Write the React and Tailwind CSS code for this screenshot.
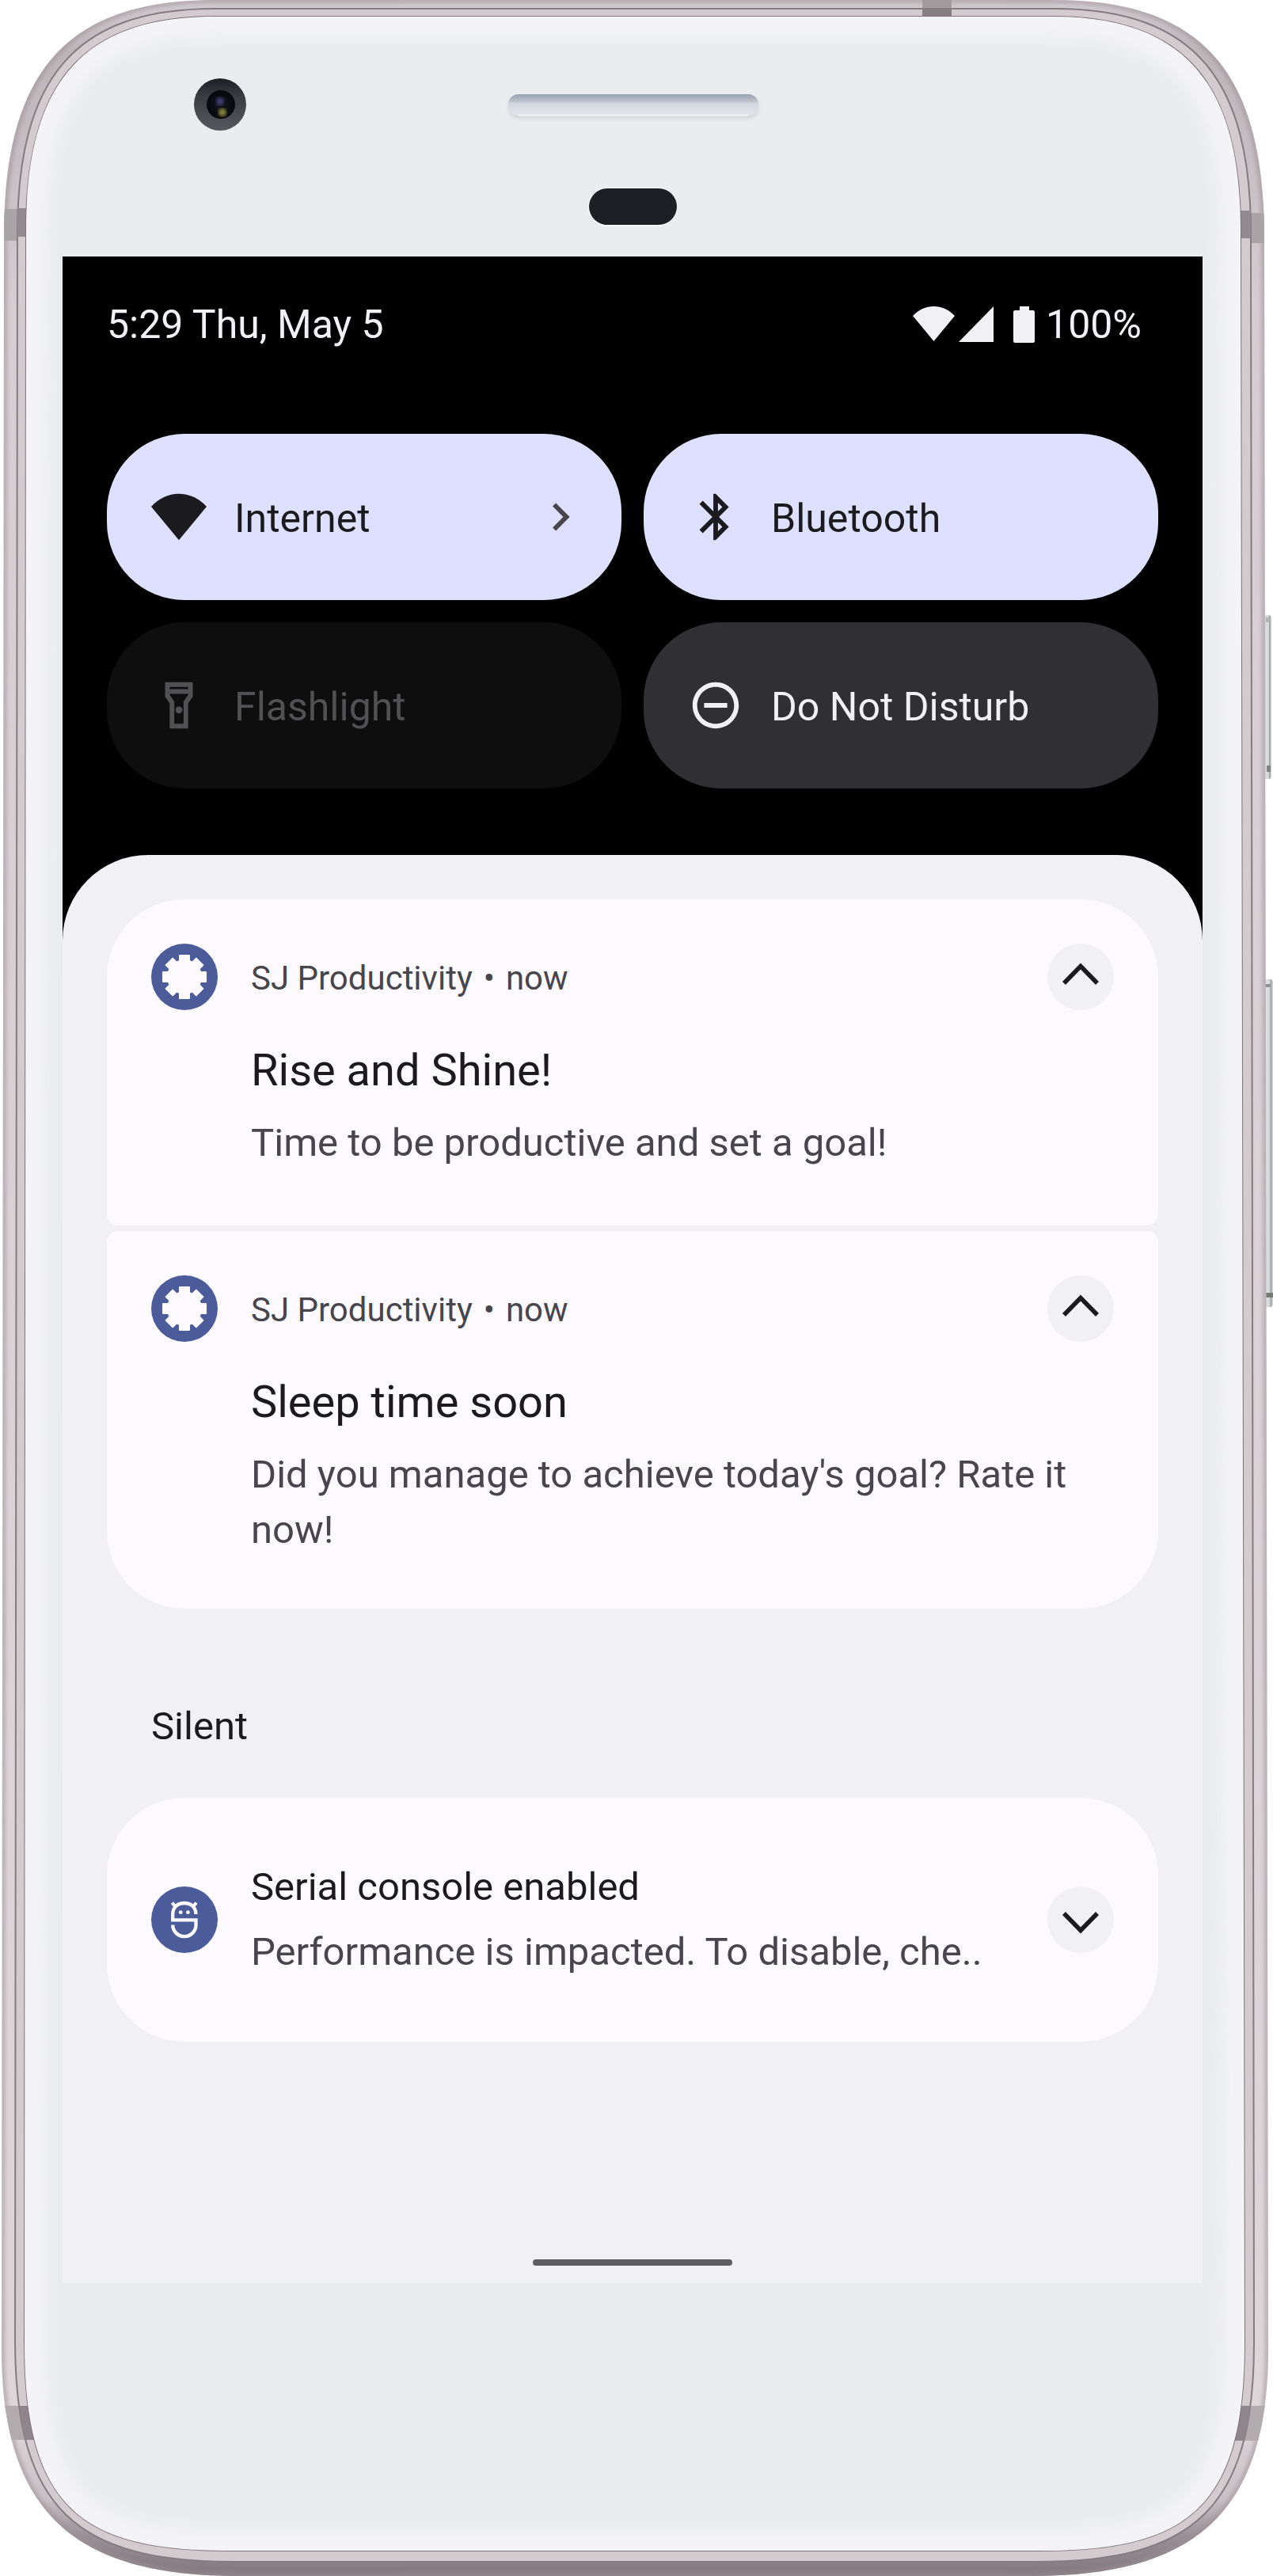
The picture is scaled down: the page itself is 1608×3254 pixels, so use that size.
import React from "react";

const OUTER =
  "M270 0H1332C1522 0 1597 95 1597 300L1602 2960C1604 3170 1514 3254 1304 3254H300C90 3254 0 3170 2 2960L5 300C5 95 80 0 270 0Z";
const MIDDLE =
  "M270 11H1332C1510 11 1580 102 1580 295L1584 2960C1584 3170 1506 3236 1309 3236H295C98 3236 20 3170 19 2960L22 295C22 102 92 11 270 11Z";
const GLASS =
  "M270 21H1330C1500 21 1567 110 1567 290L1572 2960C1572 3170 1498 3222 1314 3222H290C105 3222 31 3170 31 2960L33 290C33 110 100 21 270 21Z";

function PhoneBody() {
  return (
    <svg
      aria-hidden="true"
      className="absolute inset-0 h-full w-full"
      viewBox="0 0 1608 3254"
      preserveAspectRatio="none"
    >
      <defs>
        <linearGradient id="metal" x1="0" y1="0" x2="0" y2="1">
          <stop offset="0" stopColor="#d2cdd0" />
          <stop offset="0.02" stopColor="#bdb4b8" />
          <stop offset="0.06" stopColor="#c6bec2" />
          <stop offset="0.12" stopColor="#d6ced2" />
          <stop offset="0.94" stopColor="#ded7da" />
          <stop offset="0.97" stopColor="#c8c0c4" />
          <stop offset="0.985" stopColor="#988e93" />
          <stop offset="1" stopColor="#81777c" />
        </linearGradient>
        <linearGradient id="speaker" x1="0" y1="0" x2="0" y2="1">
          <stop offset="0" stopColor="#98a1b0" />
          <stop offset="0.3" stopColor="#b9c0cb" />
          <stop offset="0.45" stopColor="#d3d8df" />
          <stop offset="1" stopColor="#e2e5ea" />
        </linearGradient>
        <linearGradient id="key" x1="0" y1="0" x2="1" y2="0">
          <stop offset="0" stopColor="#a9abab" />
          <stop offset="0.3" stopColor="#dfe2e1" />
          <stop offset="0.65" stopColor="#d3d8d8" />
          <stop offset="0.75" stopColor="#9c9f9f" />
          <stop offset="1" stopColor="#dadddd" />
        </linearGradient>
        <radialGradient id="lens">
          <stop offset="0" stopColor="#15161c" />
          <stop offset="1" stopColor="#07080b" />
        </radialGradient>
        <linearGradient id="ring" x1="0" y1="0" x2="0" y2="1">
          <stop offset="0" stopColor="#1d1e22" />
          <stop offset="0.35" stopColor="#3b3d42" />
          <stop offset="1" stopColor="#55585d" />
        </linearGradient>
        <clipPath id="outer"><path d={OUTER} /></clipPath>
        <clipPath id="middle"><path d={MIDDLE} /></clipPath>
        <clipPath id="glass"><path d={GLASS} /></clipPath>
        <filter id="soft2"><feGaussianBlur stdDeviation="2" /></filter>
        <filter id="soft9" x="-5%" y="-5%" width="110%" height="110%"><feGaussianBlur stdDeviation="9" /></filter>
      </defs>

      <rect x="1596" y="777" width="10" height="207" rx="4" fill="url(#key)" />
      <rect x="1599" y="780" width="5" height="6" fill="#b0b4b4" />
      <rect x="1600" y="967" width="5" height="8" fill="#7f8585" />
      <rect x="1596" y="1237" width="12" height="414" rx="4" fill="url(#key)" />
      <rect x="1597" y="1243" width="8" height="4" fill="#8f9393" />
      <rect x="1597" y="1633" width="11" height="6" fill="#747a76" />

      <path d={OUTER} fill="url(#metal)" />
      <g clipPath="url(#outer)">
        <path d={OUTER} fill="none" stroke="#9d9196" strokeWidth="9" opacity="0.5" filter="url(#soft2)" />
        <rect x="0" y="264" width="60" height="40" fill="#aaa4a7" />
        <rect x="1540" y="269" width="60" height="38" fill="#aaa4a7" />
        <rect x="0" y="3039" width="60" height="43" fill="#b2abae" />
        <rect x="1540" y="3039" width="64" height="44" fill="#b2abae" />
        <rect x="1165" y="0" width="37" height="24" fill="#a39a9e" />
      </g>
      <path d={MIDDLE} fill="#d3cbce" stroke="#857b80" strokeWidth="2" />
      <g clipPath="url(#middle)">
        <rect x="0" y="263" width="60" height="36" fill="#918a8e" />
        <rect x="1540" y="266" width="60" height="35" fill="#918a8e" />
        <rect x="0" y="3039" width="60" height="43" fill="#8f868b" />
        <rect x="1540" y="3039" width="60" height="44" fill="#8f868b" />
        <rect x="1165" y="0" width="37" height="24" fill="#877e82" />
      </g>
      <path d={GLASS} fill="#ebecee" stroke="#7c7378" strokeWidth="2" />
      <g clipPath="url(#glass)">
        <path d={GLASS} fill="none" stroke="#f4f4f6" strokeWidth="50" filter="url(#soft9)" />
      </g>

      <circle cx="278" cy="132" r="33" fill="url(#ring)" />
      <circle cx="279" cy="132" r="18" fill="url(#lens)" />
      <circle cx="278" cy="128" r="5" fill="#3f3f78" filter="url(#soft2)" />
      <circle cx="281" cy="142" r="5" fill="#8b8a3c" filter="url(#soft2)" />

      <rect x="642" y="122" width="317" height="28" rx="14" fill="#d3d6da" filter="url(#soft2)" />
      <rect x="642" y="119" width="316" height="27" rx="13" fill="url(#speaker)" />
      <path d="M655 145.500H945" stroke="#f4f5f7" strokeWidth="2" />
      <rect x="743" y="237" width="112" height="49" rx="24" fill="#fafafb" />
      <rect x="744" y="238" width="111" height="46" rx="23" fill="#1d1f25" />
    </svg>
  );
}

const WIFI = "M12 20L0 5.5C3.3 2 7.5 0 12 0S20.7 2 24 5.5Z";

function StatusIcons() {
  return (
    <svg aria-hidden="true" className="h-[46px] w-[154px]" viewBox="0 0 154 46" fill="currentColor">
      <path d="M26.500 44L0 12C7.500 4 16.500 0 26.500 0S45.500 4 53 12Z" />
      <path d="M102 0V45H58Z" />
      <path d="M135 0H147V5H152Q154 5 154 7V44Q154 46 152 46H129Q127 46 127 44V7Q127 5 129 5H135Z" />
    </svg>
  );
}

function Icon({ children, className = "" }) {
  return (
    <svg aria-hidden="true" className={`size-[70px] shrink-0 ${className}`} viewBox="0 0 24 24" fill="currentColor">
      {children}
    </svg>
  );
}

const icons = {
  internet: <g transform="translate(0 2)"><path d={WIFI} /></g>,
  bluetooth: (
    <path d="M17.710 7.710 12 2h-1v7.590L6.410 5 5 6.410 10.590 12 5 17.590 6.410 19 11 14.410V22h1l5.710-5.710-4.300-4.290 4.300-4.290zM13 5.830l1.880 1.880L13 9.590V5.830zm1.880 10.460L13 18.170v-3.760l1.880 1.880z" />
  ),
  flashlight: (
    <>
      <path fillRule="evenodd" d="M6 2h12v6.200l-2 2.900V22H8V11.100L6 8.200ZM8 4v1h8V4ZM8 7v.400l2 3V20h4v-9.600l2-3V7Z" />
      <circle cx="12" cy="14" r="1.500" />
    </>
  ),
  dnd: (
    <path d="M7 11v2h10v-2H7zm5-9C6.480 2 2 6.480 2 12s4.480 10 10 10 10-4.480 10-10S17.520 2 12 2zm0 18c-4.410 0-8-3.590-8-8s3.590-8 8-8 8 3.590 8 8-3.590 8-8 8z" />
  ),
};

function Tile({ icon, label, tone, disabled, more }) {
  return (
    <button
      type="button"
      disabled={disabled}
      className={`flex h-[210px] items-center rounded-[98px] pl-14 pr-[42px] text-left ${tone}`}
    >
      <Icon>{icons[icon]}</Icon>
      <span className="ml-[35px] flex-1 pt-1 text-[50px] leading-[70px]">{label}</span>
      {more && (
        <Icon className="text-[#47464c]">
          <path d="M10 6 8.590 7.410 13.170 12l-4.580 4.590L10 18l6-6z" />
        </Icon>
      )}
    </button>
  );
}

function GearBadge() {
  return (
    <svg aria-hidden="true" className="size-[84px] shrink-0" viewBox="0 0 84 84">
      <circle cx="42" cy="42" r="42" fill="#4c5b99" />
      <g fill="#fcfaff">
        <circle cx="42" cy="42" r="22" />
        <rect x="35" y="14" width="14" height="56" rx="1" />
        <rect x="35" y="14" width="14" height="56" rx="1" transform="rotate(45 42 42)" />
        <rect x="35" y="14" width="14" height="56" rx="1" transform="rotate(90 42 42)" />
        <rect x="35" y="14" width="14" height="56" rx="1" transform="rotate(135 42 42)" />
      </g>
    </svg>
  );
}

function SerialBadge() {
  return (
    <svg aria-hidden="true" className="size-[84px] shrink-0" viewBox="0 0 84 84">
      <circle cx="42" cy="42" r="42" fill="#4c5b99" />
      <g fill="none" stroke="#fcfaff" strokeWidth="4.300">
        <path d="M56.500 35C56.500 26 50 21 41.800 21S27.200 26 27.200 35V42.300H56.500V48.500A14.650 14.650 0 0 1 27.200 48.500" />
        <path d="M26.500 20.500 31 26M57 20.500 52.500 26" />
      </g>
      <circle cx="37.200" cy="32.700" r="2.400" fill="#fcfaff" />
      <circle cx="46.400" cy="32.700" r="2.400" fill="#fcfaff" />
    </svg>
  );
}

function ExpandButton({ label, expanded }) {
  return (
    <button
      type="button"
      aria-label={label}
      aria-expanded={expanded}
      className="size-[84px] shrink-0 rounded-full bg-[#f1f0f4] text-[#1b1b1f]"
    >
      <svg
        aria-hidden="true"
        className={`size-full ${expanded ? "rotate-180" : ""}`}
        viewBox="0 0 84 84"
        fill="none"
        stroke="currentColor"
        strokeWidth="5.600"
      >
        <path d="M21 34 42 55.500 63 34" />
      </svg>
    </button>
  );
}

function Notification({ title, text, shape }) {
  return (
    <article className={`flex items-start gap-[42px] bg-[#fcfaff] px-14 pt-14 ${shape}`}>
      <GearBadge />
      <div className="min-w-0 flex-1">
        <header className="flex h-[84px] items-center justify-between">
          <p className="flex gap-3.5 pt-1 text-[42px] leading-[56px] text-[#47464c]">
            <span>SJ Productivity</span>
            <span>•</span>
            <time>now</time>
          </p>
          <ExpandButton label={`Collapse ${title}`} expanded />
        </header>
        <h2 className="mt-[34px] text-[56px] leading-[84px] text-[#1b1b1f]">{title}</h2>
        <p className="mt-[15px] text-[49px] leading-[70px] text-[#47464c]">{text}</p>
      </div>
    </article>
  );
}

export default function App() {
  return (
    <div className="relative w-full bg-white pt-[324px] pr-[89px] pb-[370px] pl-[79px] font-[Roboto,sans-serif]">
      <PhoneBody />
      <main className="relative bg-black">
        <div className="flex items-center justify-between px-14 pt-12 text-[50px] leading-[76px] text-[#f1f0f4]">
          <time>5:29 Thu, May 5</time>
          <div className="flex items-center gap-3.5 pr-[21px]">
            <StatusIcons />
            <span>100%</span>
          </div>
        </div>

        <section aria-label="Quick settings" className="mt-[100px] grid grid-cols-2 gap-7 px-14 pb-[84px]">
          <Tile icon="internet" label="Internet" tone="bg-[#dde0ff] text-[#1b1b1f]" more />
          <Tile icon="bluetooth" label="Bluetooth" tone="bg-[#dde0ff] text-[#1b1b1f]" />
          <Tile icon="flashlight" label="Flashlight" tone="bg-[#0e0e0e] text-[#515153]" disabled />
          <Tile icon="dnd" label="Do Not Disturb" tone="bg-[#303034] text-[#f1f0f4]" />
        </section>

        <section aria-label="Notifications" className="rounded-t-[108px] bg-[#f1f0f4] px-14 pt-14 pb-[22px]">
          <div className="flex flex-col gap-[7px]">
            <Notification
              title="Rise and Shine!"
              text="Time to be productive and set a goal!"
              shape="rounded-t-[98px] rounded-b-[14px] pb-[69px]"
            />
            <Notification
              title="Sleep time soon"
              text="Did you manage to achieve today's goal? Rate it now!"
              shape="rounded-t-[14px] rounded-b-[98px] pb-16"
            />
          </div>

          <h2 className="mt-[114px] pl-14 text-[49px] leading-[70px] text-[#1b1b1f]">Silent</h2>

          <article className="mt-[55px] flex h-[308px] items-center gap-[42px] rounded-[98px] bg-[#fcfaff] px-14">
            <SerialBadge />
            <div className="min-w-0 flex-1">
              <h3 className="text-[49px] leading-[70px] text-[#1b1b1f]">Serial console enabled</h3>
              <p className="mt-3 text-[49px] leading-[70px] text-[#47464c]">Performance is impacted. To disable, che..</p>
            </div>
            <ExpandButton label="Expand Serial console enabled" expanded={false} />
          </article>

          <div className="mx-auto mt-[275px] h-2 w-[252px] rounded-full bg-[#5e5e62]" />
        </section>
      </main>
    </div>
  );
}
